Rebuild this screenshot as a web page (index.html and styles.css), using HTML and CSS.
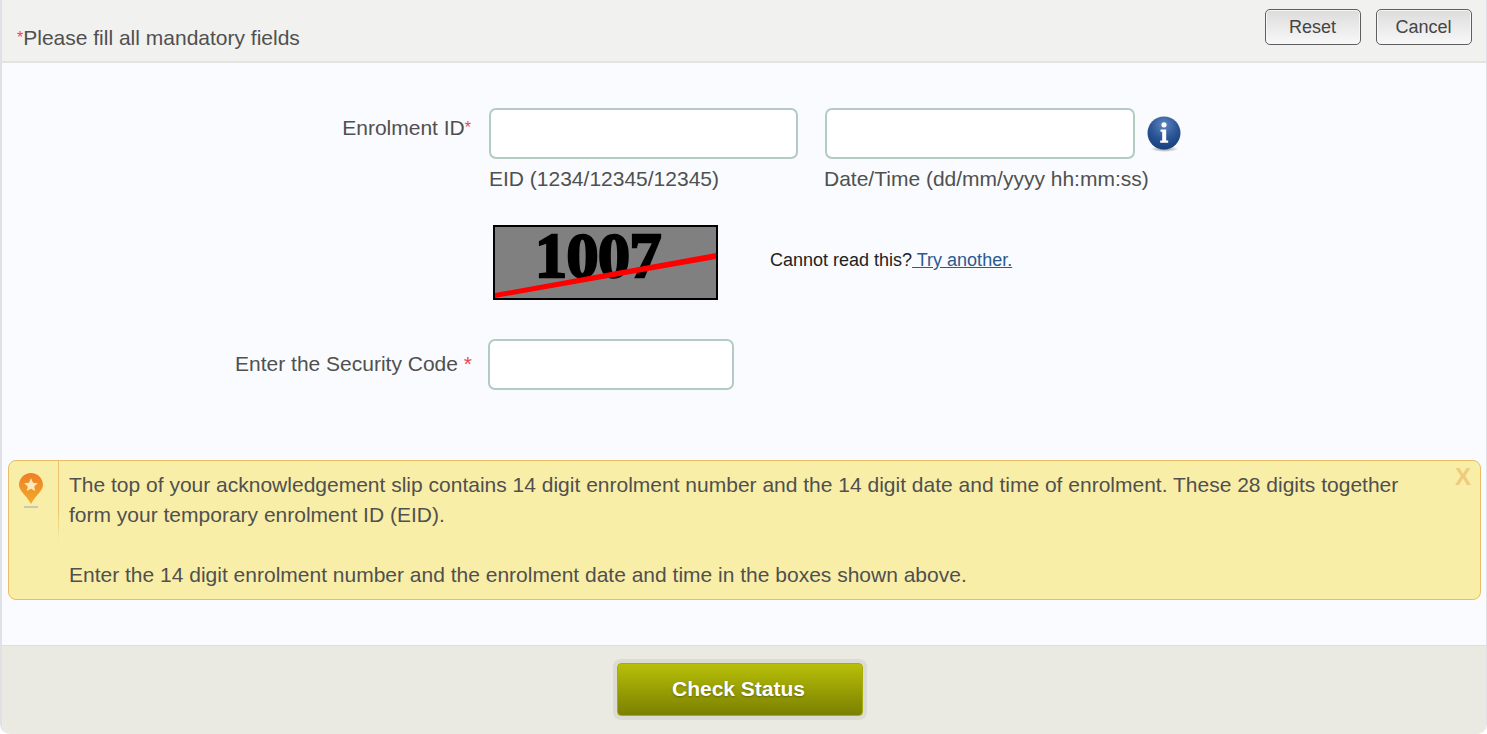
FILE: index.html
```html
<!DOCTYPE html>
<html lang="en">
<head>
<meta charset="utf-8">
<title>Check Status</title>
<link rel="stylesheet" href="styles.css">
</head>
<body>
<div class="panel">
  <header class="top">
    <p class="mandatory"><span class="req">*</span>Please fill all mandatory fields</p>
    <div class="top-actions">
      <button class="btn" type="button">Reset</button>
      <button class="btn" type="button">Cancel</button>
    </div>
  </header>
  <main class="body">
    <div class="row row-eid">
      <label class="label">Enrolment ID<span class="req">*</span></label>
      <div class="field field-eid">
        <input class="input" type="text">
        <span class="hint">EID (1234/12345/12345)</span>
      </div>
      <div class="field field-date">
        <input class="input" type="text">
        <span class="hint hint-date">Date/Time (dd/mm/yyyy hh:mm:ss)</span>
      </div>
      <svg class="info" width="35" height="38" viewBox="0 0 35 38" aria-hidden="true">
        <defs>
          <radialGradient id="ig" cx="50%" cy="25%" r="75%">
            <stop offset="0" stop-color="#5f86bd"/>
            <stop offset="0.55" stop-color="#2b5596"/>
            <stop offset="1" stop-color="#173f7d"/>
          </radialGradient>
          <radialGradient id="is" cx="50%" cy="50%" r="50%">
            <stop offset="0" stop-color="#8a8a8a"/>
            <stop offset="1" stop-color="#8a8a8a" stop-opacity="0"/>
          </radialGradient>
        </defs>
        <ellipse cx="17.5" cy="33" rx="14" ry="3" fill="url(#is)"/>
        <circle cx="17" cy="17" r="16.5" fill="url(#ig)"/>
        <circle cx="17" cy="8.8" r="2.600" fill="#fff"/>
        <path d="M13.500 13.500h5.700v11h2v2.200h-8v-2.200h2v-8.800h-1.700z" fill="#fff"/>
      </svg>
    </div>
    <div class="row row-captcha">
      <svg class="captcha" width="225" height="75" viewBox="0 0 225 75" aria-label="Security code image">
        <rect x="1" y="1" width="223" height="73" fill="#808080" stroke="#000" stroke-width="2"/>
        <text class="captcha-text" x="42" y="52">1007</text>
        <path d="M2 68 223 28v6L2 73z" fill="#f00"/>
      </svg>
      <p class="captcha-help">Cannot read this?<a class="link" href="#"> Try another.</a></p>
    </div>
    <div class="row row-code">
      <label class="label">Enter the Security Code <span class="req req-code">*</span></label>
      <input class="input input-code" type="text">
    </div>
    <section class="note">
      <div class="note-icon">
        <svg width="26" height="38" viewBox="0 0 26 38" aria-hidden="true">
          <defs>
            <linearGradient id="pg" x1="0" y1="0" x2="0" y2="1">
              <stop offset="0" stop-color="#ee7f26"/>
              <stop offset="1" stop-color="#f0ab2b"/>
            </linearGradient>
          </defs>
          <path d="M13 1C6.400 1 1 6.300 1 12.800c0 6.400 7.500 10.500 12 19.200 4.500-8.700 12-12.800 12-19.200C25 6.300 19.600 1 13 1z" fill="url(#pg)"/>
          <path d="M13 6.300l2 4.400 4.800.5-3.600 3.200 1 4.700-4.200-2.400-4.200 2.400 1-4.700-3.600-3.200 4.800-.5z" fill="#fde9b8"/>
          <rect x="6" y="34" width="14" height="2" fill="#c9c8b0"/>
        </svg>
      </div>
      <div class="note-text">
        <p>The top of your acknowledgement slip contains 14 digit enrolment number and the 14 digit date and time of enrolment. These 28 digits together form your temporary enrolment ID (EID).</p>
        <p class="note-second">Enter the 14 digit enrolment number and the enrolment date and time in the boxes shown above.</p>
      </div>
      <span class="note-close">X</span>
    </section>
  </main>
  <footer class="bottom">
    <button class="submit" type="button">Check Status</button>
  </footer>
</div>
</body>
</html>
```
FILE: styles.css
```css
* { box-sizing: border-box; }
html, body { margin: 0; padding: 0; }
body {
  width: 1487px;
  height: 734px;
  overflow: hidden;
  font-family: "Liberation Sans", Arial, sans-serif;
  color: #505050;
  background: #fff;
}
.panel {
  height: 734px;
  display: flex;
  flex-direction: column;
  border-left: 2px solid #dfe1e6;
  border-right: 1px solid #dfe1e6;
  border-bottom-left-radius: 10px;
  border-bottom-right-radius: 10px;
  overflow: hidden;
  background: #f9fbfe;
}
.req { color: #ee4455; font-size: 16px; vertical-align: 2px; }
.top {
  height: 63px;
  flex: none;
  background: #f1f1ef;
  border-bottom: 2px solid #e3e3e3;
  display: flex;
  justify-content: space-between;
  align-items: flex-start;
  padding: 0 14px 0 15px;
}
.mandatory {
  margin: 26px 0 0;
  font-size: 21px;
  line-height: 24px;
}
.top-actions {
  display: flex;
  gap: 15px;
  padding-top: 9px;
}
.btn {
  width: 96px;
  height: 36px;
  padding: 0 1px 0 0;
  font: 18px "Liberation Sans", Arial, sans-serif;
  color: #444;
  border: 1px solid #5f5f5f;
  border-radius: 5px;
  background: linear-gradient(#dcdcdc, #f8f8f8);
  box-shadow: inset 0 0 0 1px #f7f7f7;
}
.body {
  flex: 1;
  display: flex;
  flex-direction: column;
  padding-top: 45px;
}
.row { display: flex; align-items: flex-start; }
.label {
  width: 469px;
  flex: none;
  text-align: right;
  font-size: 21px;
  line-height: 24px;
}
.input {
  display: block;
  background: #fff;
  border: 2px solid #b3cac7;
  border-radius: 7px;
  outline: none;
}
.row-eid { height: 117px; }
.row-eid .label { padding-top: 8px; }
.field { display: flex; flex-direction: column; }
.field-eid { margin-left: 18px; width: 309px; }
.field-date { margin-left: 27px; width: 310px; }
.field .input { width: 100%; height: 51px; }
.hint {
  margin-top: 8px;
  font-size: 21px;
  line-height: 24px;
  white-space: nowrap;
}
.hint-date { margin-left: -1px; }
.info { flex: none; margin: 8px 0 0 12px; }
.row-captcha { align-items: center; height: 114px; padding-left: 491px; padding-bottom: 39px; }
.captcha { display: block; flex: none; overflow: visible; }
.captcha-text {
  font-family: "Liberation Serif", "DejaVu Serif", serif;
  font-weight: 700;
  font-size: 64px;
  letter-spacing: -.5px;
  fill: #000;
  stroke: #000;
  stroke-width: 2.500px;
}
.captcha-help {
  margin: 0 0 5px 52px;
  font-size: 18px;
  line-height: 20px;
  color: #222;
}
.link { color: #2a5a8f; text-decoration: underline; }
.row-code { height: 121px; }
.row-code .label { padding-top: 13px; width: 470px; }
.req-code { font-size: 21px; vertical-align: baseline; }
.input-code { margin-left: 16px; width: 246px; height: 51px; }
.note {
  position: relative;
  margin: 0 5px 0 6px;
  height: 140px;
  display: flex;
  background: #f9eea7;
  border: 1px solid #e9bd62;
  border-radius: 8px;
}
.note-icon {
  width: 50px;
  height: 80px;
  flex: none;
  padding: 11px 0 0 9px;
  border-right: 1px solid #eac36f;
  border-image: linear-gradient(#eac36f 60%, #f9eea7) 1;
}
.note-text {
  padding: 9px 60px 0 10px;
  font-size: 21px;
  line-height: 30px;
}
.note-text p { margin: 0; }
.note-text .note-second { margin-top: 30px; }
.note-close {
  position: absolute;
  top: 3px;
  right: 9px;
  font-size: 24px;
  line-height: 26px;
  font-weight: 700;
  color: #efcb7e;
}
.bottom {
  margin-top: 45px;
  height: 89px;
  flex: none;
  background: #eaeae3;
  border-top: 1px solid #dedfdd;
  display: flex;
  justify-content: center;
  padding: 17px 9px 0 0;
}
.submit {
  width: 246px;
  height: 53px;
  padding: 0 2px 2px 0;
  font: 700 21px "Liberation Sans", Arial, sans-serif;
  color: #fff;
  text-shadow: 0 1px 2px rgba(60, 60, 0, .5);
  border: 1px solid #a8ac07;
  border-radius: 4px;
  background: linear-gradient(#b8bf08, #7a8000);
  box-shadow: 0 0 0 4px #dcdcd5;
  align-self: flex-start;
}
```
